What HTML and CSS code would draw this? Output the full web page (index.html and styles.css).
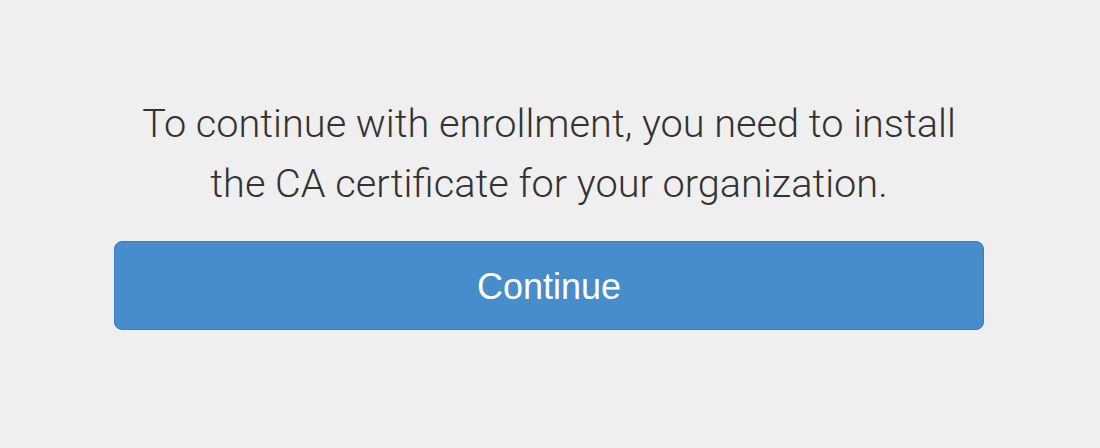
FILE: index.html
```html
<!DOCTYPE html>
<html lang="en">
<head>
<meta charset="utf-8">
<title>Enrollment</title>
<link rel="stylesheet" href="styles.css">
</head>
<body>
  <main class="page">
    <div class="panel">
      <p class="message">To continue with enrollment, you need to install<br>the CA certificate for your organization.</p>
      <button class="btn-primary" type="button">Continue</button>
    </div>
  </main>
</body>
</html>
```
FILE: styles.css
```css
html, body {
  margin: 0;
  padding: 0;
  background: #efefef;
}

.page {
  display: flex;
  justify-content: center;
  padding-top: 94px;
  padding-right: 2px;
  font-family: "Liberation Sans", Arial, sans-serif;
}

.panel {
  width: 870px;
  display: flex;
  flex-direction: column;
  align-items: center;
}

.message {
  margin: 0;
  text-align: center;
  font-family: Roboto, "Liberation Sans", sans-serif;
  font-weight: 300;
  font-size: 39.7px;
  line-height: 60px;
  color: #333333;
}

.btn-primary {
  margin-top: 27px;
  width: 870px;
  height: 89px;
  box-sizing: border-box;
  border: 1px solid #3a7cbe;
  border-radius: 8px;
  background: #478ccb;
  color: #ffffff;
  font-family: "Liberation Sans", Arial, sans-serif;
  font-size: 36px;
  padding: 3px 0 0;
  cursor: pointer;
}
```
